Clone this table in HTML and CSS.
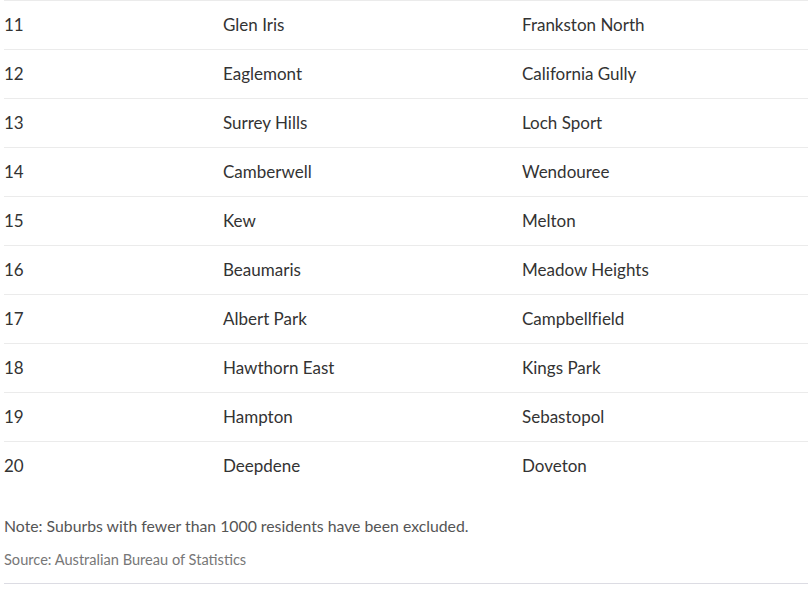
FILE: index.html
```html
<!DOCTYPE html>
<html lang="en">
<head>
<meta charset="utf-8">
<title>Suburbs</title>
<link rel="stylesheet" href="styles.css">
</head>
<body>
<div class="wrap">
  <div class="table">
    <div class="row"><span>11</span><span>Glen Iris</span><span>Frankston North</span></div>
    <div class="row"><span>12</span><span>Eaglemont</span><span>California Gully</span></div>
    <div class="row"><span>13</span><span>Surrey Hills</span><span>Loch Sport</span></div>
    <div class="row"><span>14</span><span>Camberwell</span><span>Wendouree</span></div>
    <div class="row"><span>15</span><span>Kew</span><span>Melton</span></div>
    <div class="row"><span>16</span><span>Beaumaris</span><span>Meadow Heights</span></div>
    <div class="row"><span>17</span><span>Albert Park</span><span>Campbellfield</span></div>
    <div class="row"><span>18</span><span>Hawthorn East</span><span>Kings Park</span></div>
    <div class="row"><span>19</span><span>Hampton</span><span>Sebastopol</span></div>
    <div class="row"><span>20</span><span>Deepdene</span><span>Doveton</span></div>
  </div>
  <p class="note">Note: Suburbs with fewer than 1000 residents have been excluded.</p>
  <p class="source">Source: Australian Bureau of Statistics</p>
</div>
</body>
</html>
```
FILE: styles.css
```css
html, body {
  margin: 0;
  padding: 0;
  background: #fff;
}
body {
  font-family: "Lato", "Liberation Sans", sans-serif;
  color: #333;
}
.wrap {
  padding: 0 3px 0 4px;
}
.table {
  display: flex;
  flex-direction: column;
}
.row {
  box-sizing: border-box;
  display: grid;
  grid-template-columns: 219px 299px 1fr;
  align-items: center;
  height: 49px;
  padding-bottom: 2px;
  border-top: 1px solid #ebebeb;
  font-size: 17px;
  font-variant-ligatures: none;
}
.note {
  margin: 27px 0 0;
  font-size: 15.8px;
  line-height: 18px;
  color: #555;
}
.source {
  margin: 16px 0 0;
  font-size: 14.6px;
  line-height: 18px;
  color: #777;
  padding-bottom: 14px;
  border-bottom: 1px solid #dcdce3;
}
```
